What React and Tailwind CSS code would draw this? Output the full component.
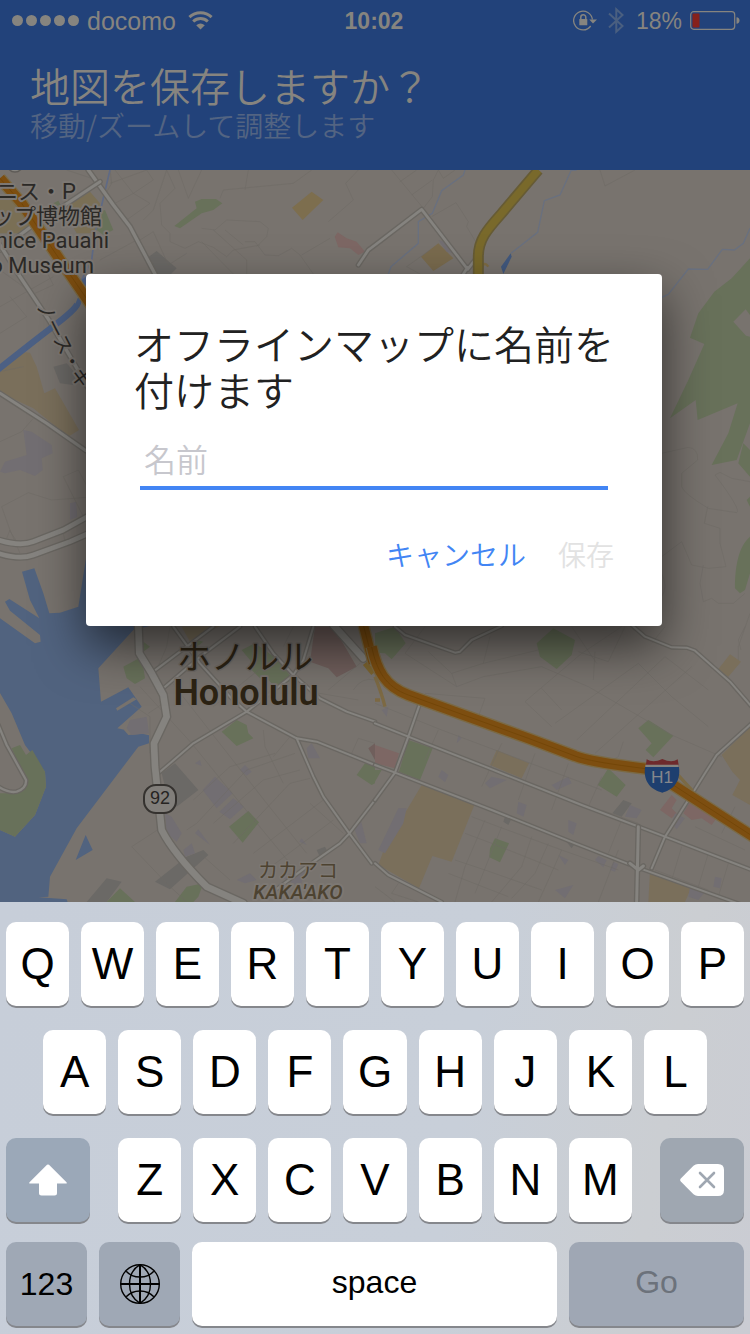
import React from "react";

/* ---------- Map drawing ---------- */

const GREEN = "#68715a";
const SAND = "#7a6f5b";
const WATER = "#51637f";
const PINK = "#7d6764";
const LILAC = "#726e72";
const GREY = "#6b6966";

function Road({ d, w = 8 }) {
  return (
    <g fill="none" strokeLinejoin="round" strokeLinecap="round">
      <path d={d} stroke="#6a6762" strokeWidth={w + 8} />
      <path d={d} stroke="#85837f" strokeWidth={w} />
    </g>
  );
}

function Highway({ d, w = 26 }) {
  return (
    <g fill="none" strokeLinejoin="round">
      <path d={d} stroke="#7b6a45" strokeWidth={w + 8} />
      <path d={d} stroke="#7d4e10" strokeWidth={w} />
      <path d={d} stroke="#734608" strokeWidth={3} />
    </g>
  );
}

function Streets({ d }) {
  return <path d={d} fill="none" stroke="#6e6a65" strokeWidth="2.2" opacity="0.75" />;
}

/* Each tile is drawn on a grid three times finer than the map itself. */
function Tile({ x, y, children }) {
  return <g transform={`translate(${x} ${y}) scale(0.33333)`}>{children}</g>;
}

function MapCanvas() {
  return (
    <svg
      className="block min-h-0 w-full flex-1 bg-[#78736e]"
      viewBox="0 170 750 732"
      preserveAspectRatio="xMidYMid slice"
      role="img"
      aria-label="Honolulu"
    >
      <rect x="-400" y="0" width="1600" height="1300" fill="#78736e" />

      <Tile x={0} y={170}>
        <path d="M0 85 60 75 110 150 60 190 0 190ZM215 100 270 65 300 100 290 190 230 190 190 120Z" fill="#7a6f55" />
        <path d="M0 585 60 545 90 548 110 590 133 670 165 655 237 780 205 800 100 715 0 668Z" fill={SAND} />
        <path d="M523 168 590 115 585 95 605 87 648 87 667 100 640 120 605 130 540 175ZM300 125 315 120 340 180 310 195 290 180ZM160 100 175 92 182 105 168 110Z" fill={GREEN} />
        <path d="M876 113 935 65 970 90 908 150Z" fill="#7d6e4e" />
        <path d="M1004 200 1013 187 1040 205 1070 215 1095 245 1075 255 1050 235 1015 232Z" fill={PINK} />
        <path d="M440 265 470 243 530 295 510 315 465 315ZM160 590 200 580 235 620 220 645 180 640Z" fill={GREY} />
        <Streets d="M330 0 335 40 315 75 420 210 460 185 505 285 560 250M330 40 440 0M0 410 160 320M60 320 130 285 160 345 105 370M0 300 70 350M290 30 200 0M345 100 400 70 345 0M400 70 460 30 440 0M380 150 450 100 400 70M430 150 460 120 500 0M500 0 525 55 480 100 485 165 510 190 510 215 555 235 595 215 640 232 680 260 700 240 780 225M535 0 565 85 605 0M660 85 670 60 880 40 935 0M745 0 735 60M1075 0 1037 40 1060 90 985 155M605 175 645 180 680 150 780 155 805 175 800 200 770 230M640 180 740 270 740 312M605 215 700 312M675 180 730 225M735 215 765 215 795 255 835 257 875 235 900 255 940 312M905 255 990 205M300 270 410 210M0 490 80 440 30 380M0 605 70 590" />
        <path d="M330 0 285 190 275 270 245 330" fill="none" stroke="#5f6a85" strokeWidth="5" />
        <Road d="M265 0 340 105 390 170 465 312" w={10} />
        <Road d="M300 35 180 115 100 165 0 240" w={9} />
        <Road d="M0 225 60 320 150 455 280 680" w={10} />
        <Road d="M0 670 140 760 258 842" w={9} />
        <path d="M-20 610Q80 530 165 465T230 392" fill="none" stroke="#4c6084" strokeWidth="19" />
        <path d="M245 330 262 315 262 345 250 350Z" fill="#4c6084" />
        <Highway d="M0 25 65 100 180 270 275 408" w={30} />
        <circle cx="45" cy="-18" r="24" fill="#85837f" stroke="#5f5c58" strokeWidth="4" />
      </Tile>

      <Tile x={375} y={170}>
        <path d="M1125 265 1070 325 1018 365 970 430 945 503 988 522 940 630 885 745 962 690 968 750 1088 700 1060 790 1010 885 1085 870 1125 760ZM1075 455 1112 418 1125 435 1125 500 1113 497Z" fill={GREEN} fillRule="evenodd" />
        <path d="M138 260 190 220 235 265 175 303Z" fill="#7a6b4e" />
        <path d="M190 210 210 215 235 250 215 245Z" fill={LILAC} />
        <Streets d="M50 0 145 115 172 80 175 30 190 0M75 35 125 0M110 75 172 30M190 0 205 25 240 0M170 140 243 98 280 155 275 170 305 220M95 290 135 312M95 290 165 240M675 0 690 48 780 0" />
        <path d="M270 0 265 15 200 62 172 130 130 155 130 220 48 290 40 312M605 0 588 2 555 75 508 92 488 187 408 250M1125 175 1105 220 1078 240 1042 238 998 298 940 297 880 373 860 382" fill="none" stroke="#69707f" strokeWidth="4" />
        <Road d="M-50 285 -20 240 0 225 140 118 278 298 300 270M278 292 260 320" w={8} />
        <path d="M340 290Q325 270 320 300" fill="none" stroke="#7e6c45" strokeWidth="7" />
        <path d="M490 0 380 130C335 180 310 210 310 260V325" fill="none" stroke="#665b35" strokeWidth="33" />
        <path d="M490 0 380 130C335 180 310 210 310 260V325" fill="none" stroke="#79692b" strokeWidth="23" />
        <path d="M378 290 407 250 410 260 385 312Z" fill="#42597f" />
      </Tile>

      <Tile x={0} y={400}>
        <path d="M70 90 95 95 155 135 158 160 125 175 128 210 105 228 60 210 15 220 0 215 15 185 80 165ZM210 310 228 305 232 350 210 360Z" fill={LILAC} />
        <path d="M66 515 103 505 130 580 148 640 180 638 235 620 262 450 600 640 400 690 295 805 303 905 385 862 425 920 352 985 447 1006 447 1030 415 1040 230 1285 150 1430 145 1490 115 1492 200 1498 215 1540 0 1540 0 655 105 730 122 725 120 705 30 632 15 605 28 597 118 655 90 600Z" fill={WATER} />
        <path d="M-5 870 35 940 75 1035 135 1115 138 1160 105 1245 45 1310-5 1288Z" fill="#78736e" />
        <path d="M35 1045 60 1035 78 1065 97 1050 135 1115 138 1160 105 1245 45 1310-5 1288V1180L40 1180 80 1150Z" fill={GREEN} />
        <path d="M348 925 400 892 410 898 352 932ZM382 960 430 930 447 950V1000L385 1005 372 990Z" fill="#78736e" />
        <path d="M227 1380 257 1305 278 1350Z" fill={WATER} />
        <Streets d="M0 125 65 95 100 55M190 230 235 210 262 260M190 230 250 350M5 320 85 278 155 300 262 292M5 320 30 390 60 460M30 390 20 415M190 400 195 425M28 390 60 440" />
        <Road d="M-5 420Q60 440 100 425L190 390 262 350M-5 460Q60 480 100 465L210 425 262 402" w={14} />
        <Road d="M-5 975 20 1035 78 1140Q80 1165 50 1175 25 1180-5 1160" w={7} />
      </Tile>

      <Tile x={375} y={400}>
        <path d="M1105 130 1090 190 1125 230V150ZM1115 300 1125 290V320ZM1125 410C1090 440 1080 500 1080 565L1095 580 1110 570 1125 520Z" fill={GREEN} />
        <Streets d="M860 160 940 142Q970 145 968 180L920 220V260Q925 280 1000 325L1085 338Q1100 330 1020 225L1035 217 1070 235 1125 245M998 320 988 370 1035 385V430L1053 500 1000 505 950 495 920 425 860 470M985 495 975 550 985 605 1010 595 1030 610H1075L1110 580M1125 640 1090 740V780M860 520Q880 560 860 590" />
      </Tile>

      <Tile x={0} y={620}>
        <path d="M370 140 425 110 435 175 405 192 380 175ZM430 65 450 80 430 95ZM590 60 610 65 590 80ZM725 90 765 70 835 120 880 180 825 200 805 180 780 175 755 150 750 120ZM665 335 710 300 740 315 745 340 760 355 710 378ZM1070 465 1095 430 1125 440V490L1115 495ZM687 620 745 573 777 607 728 668ZM525 846 560 800 610 790 595 830 580 846ZM320 846 360 805 405 846Z" fill={GREEN} />
        <path d="M545 20 660 18 570 65Z" fill={SAND} />
        <path d="M945 20H1000L1070 140 1010 172 985 145 930 125ZM1105 385 1125 370V420Z" fill="#705f5c" />
        <path d="M485 460 525 430 595 510 530 560 500 520ZM465 785 560 710 610 690 625 705 510 808ZM260 846 320 775 365 785 320 846ZM950 690 975 680 985 700 960 712Z" fill={GREY} />
        <path d="M608 510 645 470 698 520 650 565ZM658 575 700 535 732 560 690 598ZM720 450 735 435 755 455 740 467ZM585 430 600 420 605 438ZM920 385 935 370 960 415 925 415ZM390 300 440 290 447 340 395 345 380 325ZM495 580 515 590 545 640 530 665 500 640ZM550 690 575 670 585 700 555 710ZM585 640 595 628 630 675ZM710 780 750 760 770 780 735 790ZM1060 620 1080 590 1100 670 1080 670ZM840 770 920 750 900 800ZM898 665 905 655 920 675Z" fill={LILAC} />
        <Streets d="M420 200 575 370 680 500 870 730M510 180 800 550 920 700M395 680 480 625M395 680 500 790 560 846M390 250 450 290V400M445 280 490 250M560 630 590 610 740 450 885 400M580 540 690 440 825 400M640 610 790 480 900 450M700 670 870 490 930 475M760 700 970 540M800 750 1000 600M600 700 690 780M930 550 1030 640M790 330 795 380 850 490M870 350 820 410M1075 355 1125 370M1075 355 1055 400M930 215 1075 240M985 210 1080 130M1060 210Q1085 170 1125 180M510 20 500 80 470 150M640 260 800 130M880 20 850 80" />
        <Road d="M520 20 600 130 690 230 740 275M765 20 820 100 880 165 960 235 1040 275 1125 305M640 20 460 155M720 20 600 110 490 205M940 20 910 120 880 165 740 275 580 370 475 460M740 275 890 355 950 365 1125 435M890 355 940 470 970 530 1048 640 1115 730M1125 540 1048 640 1020 670 920 740 800 830" w={6} />
        <Road d="M1000 15 1090 115" w={20} />
        <Road d="M415 15 418 100 455 160 490 225 500 290 462 370 465 440 485 630Q520 700 620 800L730 850" w={20} />
        <path d="M1095 130 1120 160" stroke="#7d6530" strokeWidth="16" />
        <Highway d="M1090 15 1120 130" w={28} />
      </Tile>

      <Tile x={375} y={620}>
        <path d="M0 40 60 20 92 70 50 118 30 100 0 98ZM485 70 535 25 600 60 590 105 545 147 495 110ZM790 325 820 300 895 347 835 412 812 390 830 370ZM100 360 173 385 135 480 72 455ZM668 495 700 445 752 495 725 530ZM345 685 360 655 402 670 375 727 343 712ZM0 450 20 450 0 485Z" fill={GREEN} />
        <path d="M1028 150 1065 103 1098 125 1060 170ZM365 390 462 430 440 475 345 435ZM140 495 298 555 230 725 172 708 132 805 10 735 30 680ZM1040 405 1125 320V555L1072 525 1095 480 1072 455ZM825 755 948 805 930 846H820Z" fill={SAND} />
        <path d="M0 375 72 400 60 445 0 430ZM855 570 890 525 905 540 890 565 905 580 890 595ZM945 545 1025 595 1010 615 980 595 950 600 925 580Z" fill={PINK} />
        <path d="M745 540 770 550 740 590 712 580ZM390 590 410 595 400 615 385 605ZM570 660 600 670 590 685Z" fill={GREY} />
        <path d="M70 565 95 565 85 610 30 700 10 690ZM430 545 455 555 445 590 425 580ZM765 555 800 570 785 595 750 590ZM580 600 605 610 595 645 580 635ZM530 495 580 470 590 490 545 510ZM330 490 350 470 395 480 345 505ZM660 720 670 708 695 720 685 742ZM705 750 715 725 730 732 720 755ZM945 800 990 815 970 840 940 830ZM1020 770 1040 775 1035 805 1015 800ZM900 580 930 595 905 628 890 610ZM550 705 580 720 570 735ZM540 810 595 795 570 835ZM190 470 200 450 220 465 210 487ZM245 370 250 345 260 355ZM20 270 40 260 35 290Z" fill={LILAC} />
        <Streets d="M0 250 200 330 680 510M90 100 245 200 230 160 325 130 490 90M90 100 150 20M230 160 160 95M325 130 345 50M245 200 325 170 500 140 640 200 890 345 1040 410M330 235 310 290M150 220 330 235M450 245 530 320M500 205 560 270M450 245 620 100 740 20M540 310 790 130 890 230 1000 320M605 360 870 110 1000 210M660 400 950 140M745 365 730 410 680 440M660 95 655 180M750 20 700 125 610 95M590 20 665 130M870 20 830 70M1098 90 1090 60 1110 20M190 330 150 420M380 370 320 500M480 400 430 540M580 430 530 570M680 470 640 560M290 590 370 620 560 690 730 750M270 640 350 670 550 750M240 720 330 750 500 810M220 760 400 830M330 600 270 740 240 846M380 620 300 820M470 650 440 740 350 846M520 670 480 760 410 835M560 690 520 780 490 846M730 690 670 846M680 570 790 610M740 600 700 700M920 680 890 780M1000 700 970 800M1060 730 1030 830M840 750 1000 810M1080 560 1040 640M1000 560 1120 620M960 620 1110 690M0 800 60 846M70 790 50 820 130 846" />
        <Road d="M60 20 90 45 240 98 255 95 290 60 380 18M770 15 810 50 890 82 935 83 960 92 1065 185 1130 260M0 310 100 350 330 440 620 555 870 650 1130 750M0 435 60 458 350 570 600 670 780 740 1130 865M135 250 100 350 60 458 0 540M1130 310 1025 405 990 460 940 540 870 650 830 745M0 730 40 765 100 795 200 846" w={6} />
        <Road d="M790 620 785 846M765 730 790 750 805 738" w={9} />
        <path d="M0 170Q20 220 30 260M0 240 15 240" fill="none" stroke="#7d6a44" strokeWidth="10" />
        <path d="M895 450 950 510 935 535" fill="none" stroke="#7b6a45" strokeWidth="10" />
        <Highway d="M-10 80C5 150 30 200 100 225L460 355 600 408Q640 425 820 447L1135 650" w={30} />
        <path d="M815 418Q835 430 862 417 890 430 908 418L912 440H812Z" fill="#6e2a2c" />
        <path d="M811 434H911V442H811Z" fill="#85837f" />
        <path d="M810 441H912C918 490 890 510 862 518 832 510 804 490 810 441Z" fill="#1e3f6f" />
        <text x="861" y="488" textAnchor="middle" fontSize="52" fill="#85878c" className="font-['Liberation_Sans',sans-serif]">H1</text>
      </Tile>

      <rect x="144" y="785" width="32" height="28" rx="12" fill="#817e7a" stroke="#35322f" strokeWidth="2" />
      <text x="160" y="804" textAnchor="middle" fontSize="18" fill="#262422" className="font-['Liberation_Sans',sans-serif]">92</text>

      <g
        className="font-['Roboto','Noto_Sans_CJK_JP',sans-serif] [paint-order:stroke]"
        stroke="#7d7873"
        strokeWidth="4"
        strokeLinejoin="round"
        fontSize="22"
        fill="#2b2926"
      >
        <text x="76" y="199" textAnchor="end">ニス・P</text>
        <text x="102" y="224" textAnchor="end">ップ博物館</text>
        <text x="109" y="248" textAnchor="end">nice Pauahi</text>
        <text x="94" y="273" textAnchor="end">o Museum</text>
        <text fontSize="19" transform="translate(36 306) rotate(63)">ノース・キ</text>
      </g>

      <g
        className="font-['Roboto','Noto_Sans_CJK_JP',sans-serif] [paint-order:stroke]"
        strokeLinejoin="round"
        textAnchor="middle"
      >
        <text x="245" y="669" fontSize="34" fill="#2c2314" stroke="#6f6a65" strokeWidth="3">ホノルル</text>
        <text x="246" y="705" fontSize="36" fontWeight="600" fill="#2c2314" stroke="#77726d" strokeWidth="4">Honolulu</text>
        <text x="298" y="878" fontSize="20" fill="#4d4331" stroke="#7d7873" strokeWidth="3">カカアコ</text>
        <text x="298" y="899" fontSize="20" fontStyle="italic" fontWeight="500" fill="#4d4331" stroke="#7d7873" strokeWidth="4">KAKA'AKO</text>
      </g>
    </svg>
  );
}

/* ---------- Status bar ---------- */

function StatusBar() {
  return (
    <div className="grid h-10 grid-cols-[1fr_auto_1fr] items-center pt-px pr-[10px] pl-3 font-['Liberation_Sans',sans-serif] text-[23px] leading-7 text-[#86847f]">
      <div className="flex items-center gap-2">
        <div className="flex gap-[3px]">
          {[0, 1, 2, 3, 4].map((i) => (
            <span key={i} className="size-[11px] rounded-full bg-[#86847f]" />
          ))}
        </div>
        <span className="text-[25px]">docomo</span>
        <svg className="ml-1 h-[19px] w-[25px]" viewBox="0 0 25 19" fill="none" stroke="#86847f" strokeWidth="3">
          <path d="M1.400 6.200C7.600 .4 17.400 .4 23.600 6.200" />
          <path d="M5.200 10.500C9.400 6.600 15.600 6.600 19.800 10.500" />
          <path d="M12.500 18.500 8.200 14.300Q12.500 10.600 16.800 14.300Z" fill="#86847f" stroke="none" />
        </svg>
      </div>
      <span className="mr-1 font-bold">10:02</span>
      <div className="flex items-center justify-end gap-2">
        <svg className="mr-[3px] h-[21px] w-[24px]" viewBox="0 0 24 21" fill="none" stroke="#86847f" strokeWidth="1.300">
          <path d="M19.400 9.500A9.400 9.400 0 1 0 17.700 16" />
          <path d="M16.200 9.500H24L20 13.500Z" fill="#86847f" stroke="none" />
          <rect x="6.300" y="9" width="8" height="6.300" rx=".6" fill="#86847f" stroke="none" />
          <path d="M7.800 9.500V7.300a2.500 2.500 0 0 1 5 0V9.500" strokeWidth="1.500" />
        </svg>
        <svg className="mr-1 h-[27px] w-[16px]" viewBox="0 0 16 27" fill="none" stroke="#4a5f80" strokeWidth="2">
          <path d="M1 6.500 14.500 19 8.300 24.700V2.300L14.500 8 1 20.500" />
        </svg>
        <span>18%</span>
        <svg className="h-[19px] w-[50px]" viewBox="0 0 50 19">
          <rect x=".7" y=".7" width="44" height="17.600" rx="3" fill="none" stroke="#86847f" strokeWidth="1.200" />
          <rect x="2.500" y="2.500" width="7" height="14" rx="1" fill="#86211b" />
          <path d="M46.500 6.300Q49.500 6.500 49.500 9.500T46.500 12.700Z" fill="#86847f" />
        </svg>
      </div>
    </div>
  );
}

/* ---------- Dialog ---------- */

function NameDialog() {
  return (
    <div className="absolute inset-0 flex items-center justify-center pr-0.5 pb-0.5">
      <form
        role="dialog"
        aria-labelledby="dialog-title"
        onSubmit={(e) => e.preventDefault()}
        className="w-[576px] max-w-full rounded-[4px] bg-white pt-[46px] pb-11 shadow-[0_20px_50px_rgba(0,0,0,0.6)]"
      >
        <h2 id="dialog-title" className="pr-10 pl-12 text-[40px] leading-[46px] font-[350] text-[#212121]">
          オフラインマップに名前を付けます
        </h2>
        <div className="mt-6 px-[54px]">
          <input
            type="text"
            aria-label="名前"
            placeholder="名前"
            className="block h-[54px] w-full border-b-4 border-[#4285f4] bg-transparent px-1 pb-1.5 text-[32px] font-[350] text-[#212121] outline-none placeholder:text-[#c7c7cd]"
          />
        </div>
        <div className="mt-9 flex justify-end gap-8 pr-12 text-[28px] leading-[56px] font-[350]">
          <button type="button" className="text-[#4285f4]">キャンセル</button>
          <button type="submit" disabled className="text-[#e2e2e2]">保存</button>
        </div>
      </form>
    </div>
  );
}

/* ---------- Keyboard ---------- */

const KEY = "flex h-[84px] items-center justify-center rounded-[10px] shadow-[0_2px_0_#85878c]";
const LETTER = "min-w-0 flex-1 bg-white text-[44px]";
const DARK = "bg-[#9fa8b5] text-[32px]";

function Letters({ keys }) {
  return keys.split("").map((k) => (
    <button key={k} type="button" className={`${KEY} ${LETTER}`}>{k}</button>
  ));
}

function Keyboard() {
  return (
    <div className="flex flex-col bg-[linear-gradient(100deg,#c7ced9_0%,#c8cfd9_60%,#cbced2_85%,#caccd3_100%)] px-[6px] pt-5 pb-2 font-['Liberation_Sans',sans-serif] text-black">
      <div className="flex gap-3">
        <Letters keys="QWERTYUIOP" />
      </div>
      <div className="mt-6 flex gap-3 px-[37px]">
        <Letters keys="ASDFGHJKL" />
      </div>
      <div className="mt-6 flex gap-7">
        <button type="button" aria-label="shift" className={`${KEY} w-[84px] bg-[#9ba8b8]`}>
          <svg className="h-8 w-[38px]" viewBox="0 0 38 32" fill="#fff">
            <path d="M18 .8Q19 0 20 .8L37.500 18.200Q38.300 19.500 37 19.500H28V29Q28 31.500 25.500 31.500H12.500Q10 31.500 10 29V19.500H1Q-.3 19.500 .5 18.200Z" />
          </svg>
        </button>
        <div className="flex min-w-0 flex-1 gap-3">
          <Letters keys="ZXCVBNM" />
        </div>
        <button type="button" aria-label="delete" className={`${KEY} w-[84px] bg-[#9fa7b1]`}>
          <svg className="h-8 w-11" viewBox="0 0 44 32">
            <path d="M18 0H38Q44 0 44 6V26Q44 32 38 32H18Q15.500 32 13.500 30.200L.8 17.500Q-.5 16 .8 14.500L13.500 1.800Q15.500 0 18 0Z" fill="#fff" />
            <path d="M20 9 34 23M34 9 20 23" stroke="#9fa7b1" strokeWidth="2.600" strokeLinecap="round" />
          </svg>
        </button>
      </div>
      <div className="mt-5 flex gap-3">
        <button type="button" className={`${KEY} ${DARK} w-[81px]`}>123</button>
        <button type="button" aria-label="next keyboard" className={`${KEY} ${DARK} w-[81px]`}>
          <svg className="size-10" viewBox="0 0 40 40" fill="none" stroke="#000" strokeWidth="1.400">
            <circle cx="20" cy="20" r="19.300" />
            <path d="M20 .7V39.300M.7 20H39.300" strokeWidth="2" />
            <path d="M20 .7C6 9 6 31 20 39.300M20 .7C34 9 34 31 20 39.300" />
            <path d="M6.200 7.200C13 15 27 15 33.800 7.200M6.200 32.800C13 25 27 25 33.800 32.800" />
          </svg>
        </button>
        <button type="button" className={`${KEY} min-w-0 flex-1 bg-white pb-1 text-[32px]`}>space</button>
        <button type="button" disabled className={`${KEY} w-[175px] bg-[#9fa7b4] pb-1 text-[32px] text-[#6c727b]`}>Go</button>
      </div>
    </div>
  );
}

export default function App() {
  return (
    <div className="flex min-h-screen flex-col font-['Noto_Sans_CJK_JP',sans-serif]">
      <main className="relative flex flex-1 flex-col overflow-hidden">
        <header className="bg-[#22427a]">
          <StatusBar />
          <div className="px-[30px] pt-[21px] pb-[29px] font-[350]">
            <h1 className="text-[40px] leading-[48px] text-[#86847f]">地図を保存しますか？</h1>
            <p className="text-[28px] leading-8 text-[#536482]">移動/ズームして調整します</p>
          </div>
        </header>
        <MapCanvas />
        <NameDialog />
      </main>
      <Keyboard />
    </div>
  );
}
